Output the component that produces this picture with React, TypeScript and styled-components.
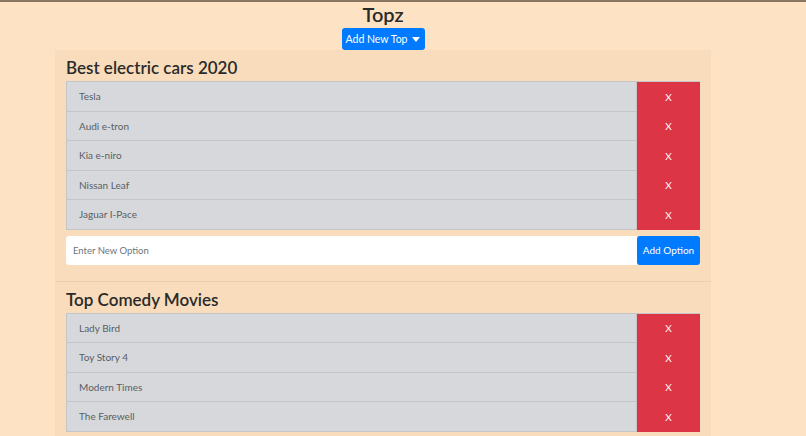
import React from "react";
import styled, { createGlobalStyle } from "styled-components";

const GlobalStyle = createGlobalStyle`
  html, body {
    margin: 0;
    padding: 0;
    background: #fde3c3;
  }
  body {
    font-family: "Lato", "Noto Sans", sans-serif;
    color: #212529;
    border-top: 2px solid #8a7560;
  }
`;

const Page = styled.div`
  width: 766px;
  min-height: 434px;
  display: flex;
  flex-direction: column;
  align-items: center;
`;

const Heading = styled.h1`
  margin: 0;
  font-size: 20px;
  font-weight: 600;
  line-height: 25px;
  height: 26px;
  color: #2a2a2a;
`;

const DropButton = styled.button`
  display: flex;
  align-items: center;
  gap: 5px;
  width: 83px;
  justify-content: center;
  height: 22px;
  padding: 0;
  border: none;
  border-radius: 3px;
  background: #007bff;
  color: #fff;
  font-family: inherit;
  font-size: 10.5px;
`;

const Caret = styled.span`
  width: 0;
  height: 0;
  border-left: 4px solid transparent;
  border-right: 4px solid transparent;
  border-top: 5px solid #fff;
`;

const Panel = styled.section`
  width: 656px;
  box-sizing: border-box;
  background: #f8dcbb;
  padding: 4px 11px 16px;
  border-bottom: 1px solid #ecd0ae;
`;

const PanelTitle = styled.h2`
  margin: 0;
  font-size: 17px;
  font-weight: 600;
  line-height: 27px;
  color: #2a2a2a;
`;

const List = styled.ul`
  list-style: none;
  margin: 0;
  padding: 0;
  border-top: 1px solid #c3c5c8;
`;

const Row = styled.li`
  display: flex;
  height: 29.5px;
`;

const Item = styled.div`
  flex: 1;
  display: flex;
  align-items: center;
  padding-left: 12px;
  background: #d6d8db;
  border: 1px solid #c3c5c8;
  border-top: none;
  color: #5a5e63;
  font-size: 10px;
`;

const RemoveButton = styled.button`
  width: 63px;
  border: none;
  background: #dc3545;
  color: #fff;
  font-family: inherit;
  font-size: 10px;
  padding: 0;
`;

const FormRow = styled.form`
  display: flex;
  margin-top: 6px;
  height: 29px;
`;

const OptionInput = styled.input`
  flex: 1;
  border: none;
  border-radius: 3px 0 0 3px;
  background: #fff;
  padding: 0 7px;
  font-family: inherit;
  font-size: 9.5px;
  color: #495057;
  &::placeholder {
    color: #6c757d;
  }
`;

const AddButton = styled.button`
  width: 63px;
  border: none;
  border-radius: 3px;
  background: #007bff;
  color: #fff;
  font-family: inherit;
  font-size: 10px;
  padding: 0;
`;

const tops = [
  {
    title: "Best electric cars 2020",
    options: ["Tesla", "Audi e-tron", "Kia e-niro", "Nissan Leaf", "Jaguar I-Pace"],
  },
  {
    title: "Top Comedy Movies",
    options: ["Lady Bird", "Toy Story 4", "Modern Times", "The Farewell"],
  },
];

export default function App() {
  return (
    <>
      <GlobalStyle />
      <Page>
        <Heading>Topz</Heading>
        <DropButton>
          Add New Top <Caret />
        </DropButton>
        {tops.map((top) => (
          <Panel key={top.title}>
            <PanelTitle>{top.title}</PanelTitle>
            <List>
              {top.options.map((option) => (
                <Row key={option}>
                  <Item>{option}</Item>
                  <RemoveButton>X</RemoveButton>
                </Row>
              ))}
            </List>
            <FormRow onSubmit={(e) => e.preventDefault()}>
              <OptionInput placeholder="Enter New Option" />
              <AddButton type="button">Add Option</AddButton>
            </FormRow>
          </Panel>
        ))}
      </Page>
    </>
  );
}
